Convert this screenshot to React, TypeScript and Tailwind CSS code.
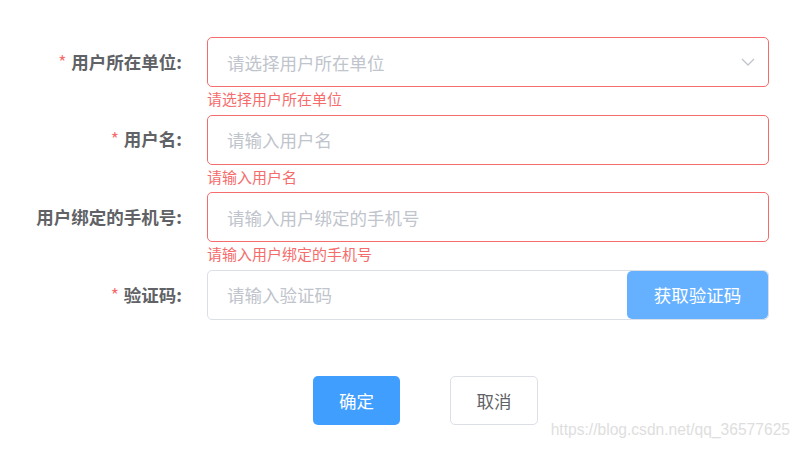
import React from 'react';

const font = { fontFamily: '"Noto Sans CJK SC", "Liberation Sans", sans-serif' };

type ItemProps = {
  label: string;
  required?: boolean;
  error?: string;
  children: React.ReactNode;
};

const FormItem: React.FC<ItemProps> = ({ label, required, error, children }) => {
  return (
    <div className="flex">
      <div className="w-[207px] shrink-0 pr-[25px] h-[50px] flex items-center justify-end text-[17.5px] font-bold text-[#606266]">
        {required && <span className="text-[#f56c6c] mr-[5px] font-normal">*</span>}
        {label}:
      </div>
      <div className="w-[562px] flex flex-col">
        {children}
        <div className="h-[27.6px] pt-[4px] text-[15px] leading-[16px] text-[#f56c6c]">{error}</div>
      </div>
    </div>
  );
};

const TextInput: React.FC<{ placeholder: string; invalid?: boolean }> = ({ placeholder, invalid }) => (
  <input
    placeholder={placeholder}
    className={
      'h-[50px] w-full rounded-[5px] border bg-white px-[19px] text-[17.5px] text-[#606266] outline-none placeholder:text-[#c0c4cc] ' +
      (invalid ? 'border-[#f56c6c]' : 'border-[#dcdfe6]')
    }
    style={font}
  />
);

export default function App() {
  return (
    <div className="relative h-[449px] w-[800px] bg-white pt-[37px]" style={font}>
      <FormItem label="用户所在单位" required error="请选择用户所在单位">
        <div className="relative">
          <TextInput placeholder="请选择用户所在单位" invalid />
          <svg
            className="absolute right-[14px] top-[21px]"
            width="14"
            height="8"
            viewBox="0 0 14 8"
            fill="none"
            stroke="#c0c4cc"
            strokeWidth="1.3"
          >
            <polyline points="1,1 7,7 13,1" />
          </svg>
        </div>
      </FormItem>

      <FormItem label="用户名" required error="请输入用户名">
        <TextInput placeholder="请输入用户名" invalid />
      </FormItem>

      <FormItem label="用户绑定的手机号" error="请输入用户绑定的手机号">
        <TextInput placeholder="请输入用户绑定的手机号" invalid />
      </FormItem>

      <FormItem label="验证码" required>
        <div className="flex h-[50px] items-stretch rounded-[5px] border border-[#dcdfe6] bg-white">
          <input
            placeholder="请输入验证码"
            className="min-w-0 flex-1 bg-transparent px-[19px] text-[17.5px] text-[#606266] outline-none placeholder:text-[#c0c4cc]"
            style={font}
          />
          <button
            className="m-0 w-[141px] rounded-[5px] bg-[#66b1ff] text-[17.5px] text-white"
            style={font}
          >
            获取验证码
          </button>
        </div>
      </FormItem>

      <div className="flex gap-[50px] pl-[313px] pt-[29px]">
        <button
          className="h-[49px] w-[87px] rounded-[5px] bg-[#409eff] text-[17.5px] text-white"
          style={font}
        >
          确定
        </button>
        <button
          className="h-[49px] w-[88px] rounded-[5px] border border-[#dcdfe6] bg-white text-[17.5px] text-[#606266]"
          style={font}
        >
          取消
        </button>
      </div>

      <div
        className="absolute bottom-[8px] right-[10px] text-[15.6px] text-[#dedede]"
        style={{ fontFamily: '"Liberation Sans", Arial, sans-serif' }}
      >
        https://blog.csdn.net/qq_36577625
      </div>
    </div>
  );
}
